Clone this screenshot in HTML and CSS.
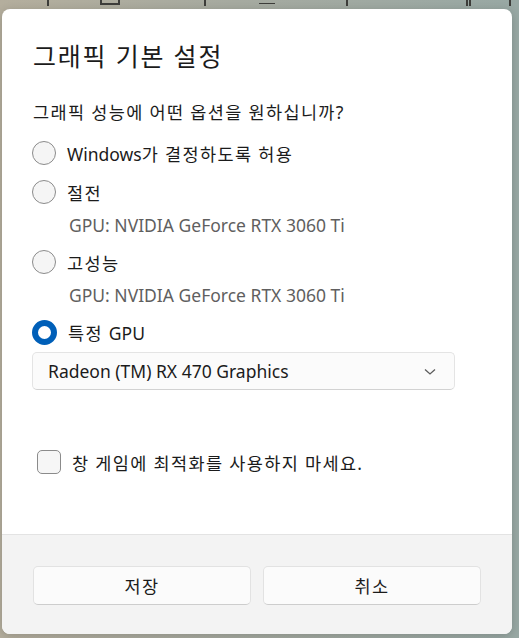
FILE: index.html
```html
<!DOCTYPE html>
<html lang="ko">
<head>
    <meta charset="UTF-8">
    <meta name="viewport" content="width=device-width, initial-scale=1.0">
    <title>그래픽 기본 설정</title>
    <link rel="stylesheet" href="styles.css">
</head>
<body>
    <div class="backdrop">
        <span class="mark m1"></span>
        <span class="mark m2"></span>
        <span class="mark m3"></span>
        <span class="mark m4"></span>
        <span class="mark m5"></span>
        <span class="mark m6"></span>
        <span class="mark m7"></span>
    </div>

    <div class="dialog">
        <div class="dialog-body">
            <h1 class="dialog-title">그래픽 기본 설정</h1>
            <p class="question">그래픽 성능에 어떤 옵션을 원하십니까?</p>

            <!-- GPU 선택 -->
            <div class="options">
                <label class="option">
                    <span class="radio"></span>
                    <span>Windows<span class="ko">가 결정하도록 허용</span></span>
                </label>
                <div class="option-group">
                    <label class="option">
                        <span class="radio"></span>
                        <span class="ko">절전</span>
                    </label>
                    <div class="option-desc">GPU: NVIDIA GeForce RTX 3060 Ti</div>
                </div>
                <div class="option-group">
                    <label class="option">
                        <span class="radio"></span>
                        <span class="ko">고성능</span>
                    </label>
                    <div class="option-desc">GPU: NVIDIA GeForce RTX 3060 Ti</div>
                </div>
                <div class="option-group">
                    <label class="option">
                        <span class="radio checked"></span>
                        <span><span class="ko">특정 </span>GPU</span>
                    </label>
                    <div class="combo">
                        <span>Radeon (TM) RX 470 Graphics</span>
                        <svg class="chevron" width="12" height="8" viewBox="0 0 12 8">
                            <path d="M1 1.5 L6 6 L11 1.5" fill="none" stroke="#5c5c5c" stroke-width="1.3"/>
                        </svg>
                    </div>
                </div>
            </div>

            <label class="check-row">
                <span class="checkbox"></span>
                <span class="ko">창 게임에 최적화를 사용하지 마세요.</span>
            </label>
        </div>

        <div class="dialog-footer">
            <button class="btn"><span class="ko">저장</span></button>
            <button class="btn"><span class="ko">취소</span></button>
        </div>
    </div>
</body>
</html>
```

FILE: styles.css
```css
body {
    margin: 0;
    width: 519px;
    height: 638px;
    overflow: hidden;
    font-family: "Noto Sans", "Noto Sans CJK KR", sans-serif;
    color: #1b1b1b;
    background: linear-gradient(90deg, #b4ae9d 0%, #a6aaa0 45%, #98a8a4 100%);
    position: relative;
}
.backdrop {
    position: absolute;
    inset: 0;
}
.mark {
    position: absolute;
    top: 0;
    width: 2px;
    height: 6px;
    background: #3d3d3a;
}
.m1 { left: 47px; }
.m2 { left: 100px; width: 20px; height: 5px; background: none; border: 2px solid #3d3d3a; border-top: none; box-sizing: border-box; }
.m3 { left: 204px; }
.m4 { left: 346px; }
.m5 { left: 466px; width: 5px; background: none; border-left: 2px solid #3d3d3a; border-right: 2px solid #3d3d3a; box-sizing: border-box; }
.m6 { left: 509px; }
.m7 { left: 259px; top: 3px; width: 16px; height: 1px; }

.dialog {
    position: relative;
    margin: 9px 0 0 2px;
    width: 510px;
    height: 625px;
    background: #fff;
    border-radius: 8px;
    overflow: hidden;
    display: flex;
    flex-direction: column;
    box-shadow: 0 2px 10px rgba(0, 0, 0, 0.18);
}
.dialog-body {
    flex: 1;
    padding: 31px 31px 0 30px;
}
.ko {
    letter-spacing: 1.35px;
}
.dialog-title {
    margin: 0;
    font-size: 25px;
    font-weight: 400;
    line-height: 32px;
    padding-left: 1px;
    letter-spacing: 1.8px;
}
.question {
    margin: 28px 0 0;
    font-size: 17.5px;
    line-height: 24px;
    padding-left: 1px;
    letter-spacing: 1.35px;
}
.options {
    margin-top: 13px;
    display: flex;
    flex-direction: column;
    gap: 7px;
}
.option {
    display: flex;
    align-items: center;
    height: 32px;
    font-size: 17.5px;
    gap: 11px;
}
.radio {
    width: 22px;
    height: 22px;
    border: 1.6px solid #8b8b8b;
    border-radius: 50%;
    background: #f5f5f5;
    flex-shrink: 0;
}
.radio.checked {
    width: 13px;
    height: 13px;
    border: 6.5px solid #005fb8;
    background: #fff;
}
.option-desc {
    margin-top: 3px;
    padding-left: 37px;
    height: 28px;
    line-height: 28px;
    font-size: 17.5px;
    color: #5f5f5f;
}
.combo {
    margin-top: 4px;
    width: 388px;
    height: 36px;
    border: 1px solid #e4e4e4;
    border-bottom-color: #d2d2d2;
    border-radius: 5px;
    background: #fbfbfb;
    display: flex;
    align-items: center;
    justify-content: space-between;
    padding: 0 18px 0 15px;
    font-size: 17.5px;
}
.chevron {
    margin-top: 1px;
}
.check-row {
    margin-top: 56px;
    margin-left: 5px;
    display: flex;
    align-items: center;
    height: 32px;
    gap: 11px;
    font-size: 17.5px;
}
.checkbox {
    width: 22px;
    height: 22px;
    border: 1.5px solid #8b8b8b;
    border-radius: 5px;
    background: #f6f6f6;
}
.dialog-footer {
    height: 100px;
    border-top: 1px solid #e3e3e3;
    background: #f3f3f3;
    padding: 31px 31px 0;
    box-sizing: border-box;
    display: flex;
    gap: 12px;
    align-items: flex-start;
}
.btn {
    flex: 1;
    height: 39px;
    border: 1px solid #e2e2e2;
    border-bottom-color: #cdcdcd;
    border-radius: 5px;
    background: #fbfbfb;
    font-family: inherit;
    font-size: 17.5px;
    color: #1b1b1b;
}
```
